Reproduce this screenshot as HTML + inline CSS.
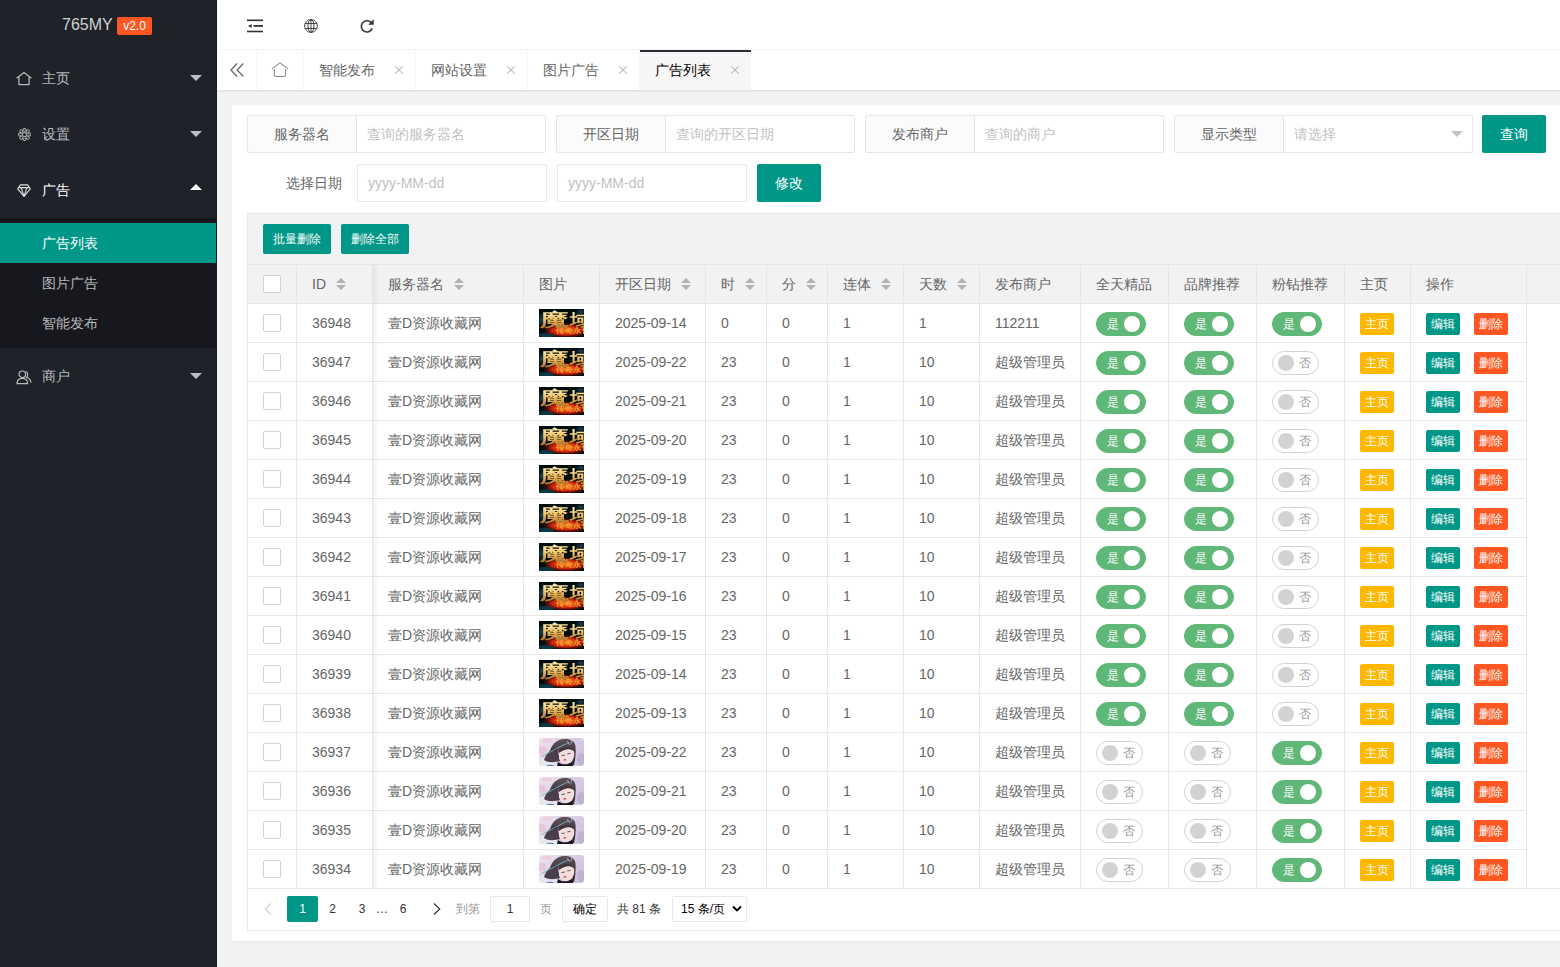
<!DOCTYPE html><html><head><meta charset="utf-8"><style>
*{margin:0;padding:0;box-sizing:border-box}
html,body{width:1560px;height:967px;overflow:hidden;background:#f2f2f2;font-family:"Liberation Sans",sans-serif;font-size:14px;color:#666}
.abs{position:absolute}
#side{position:absolute;left:0;top:0;width:217px;height:967px;background:#20222a}
#side .edge{position:absolute;left:216px;top:0;width:1px;height:967px;background:#171a22}
#logo{position:absolute;left:0;top:0;width:216px;height:50px;background:#20222a;box-shadow:0 1px 2px rgba(0,0,0,.15)}
#logo .t{position:absolute;left:62px;top:15px;font-size:16px;line-height:20px;color:rgba(255,255,255,.8)}
#logo .v{position:absolute;left:117px;top:17px;width:35px;height:18px;line-height:18px;background:#ff5722;color:#fff;font-size:12px;text-align:center;border-radius:2px}
.mi{position:absolute;left:0;width:216px;height:56px;line-height:56px;color:rgba(255,255,255,.7)}
.mi .tx{position:absolute;left:42px;top:0}
.mi svg{position:absolute}
.mi .ar{position:absolute;left:190px;top:25px;width:0;height:0;border-left:6px solid transparent;border-right:6px solid transparent;border-top:6px solid rgba(255,255,255,.7)}
.mi .ar.up{top:22px;border-top:none;border-bottom:6px solid #fff}
#sub{position:absolute;left:0;top:218px;width:216px;height:130px;background:#16181d}
.sd{position:absolute;left:0;width:216px;height:40px;line-height:40px;color:rgba(255,255,255,.7)}
.sd span{position:absolute;left:42px;top:0}
.sd.on{background:#009688;color:#fff}
#hdr{position:absolute;left:217px;top:0;width:1343px;height:50px;background:#fff;border-bottom:1px solid #f6f6f6}
#tabs{position:absolute;left:217px;top:50px;width:1343px;height:40px;background:#fff;box-shadow:0 1px 2px rgba(0,0,0,.1)}
.tsep{position:absolute;top:0;width:1px;height:40px;background:#f6f6f6}
.tab{position:absolute;top:0;width:112px;height:40px;line-height:40px;color:#666}
.tab .tx{position:absolute;left:16px;top:0}
.tab .x{position:absolute;left:90px;top:0;width:16px;height:40px}
.tab.on{background:#f6f6f6;color:#000}
.tab.on:before{content:"";position:absolute;left:1px;top:0;width:111px;height:2px;background:#292b34}
#card{position:absolute;left:232px;top:105px;width:1400px;height:836px;background:#fff;border-radius:2px;box-shadow:0 1px 2px 0 rgba(0,0,0,.05)}
.lbl{position:absolute;height:38px;line-height:36px;width:110px;border:1px solid #e6e6e6;background:#fbfbfb;text-align:center;color:#666;border-radius:2px 0 0 2px}
.inp{position:absolute;height:38px;line-height:36px;border:1px solid #e6e6e6;background:#fff;color:#c2c2c2;padding-left:10px;border-radius:0 2px 2px 0}
.inp2{border-radius:2px}
.btn{position:absolute;height:38px;line-height:38px;background:#009688;color:#fff;text-align:center;border-radius:2px}
.btnsm{position:absolute;height:30px;line-height:30px;background:#009688;color:#fff;font-size:12px;text-align:center;border-radius:2px}
#tbl{position:absolute;left:247px;top:213px;width:1400px;height:718px;border:1px solid #e6e6e6;background:#fff}
#tool{position:absolute;left:0;top:0;width:100%;height:51px;background:#f2f2f2;border-bottom:1px solid #e6e6e6}
#thead{position:absolute;left:0;top:51px;width:100%;height:39px;background:#f2f2f2;border-bottom:1px solid #e6e6e6}
.vl{position:absolute;width:1px;background:#e6e6e6}
.hl{position:absolute;height:1px;background:#e6e6e6}
.c{position:absolute;height:38px;line-height:38px;white-space:nowrap;color:#666}
.cb{position:absolute;width:18px;height:18px;border:1px solid #d2d2d2;background:#fff;border-radius:2px}
.sort{position:absolute;width:10px;height:13px}
.sort:before{content:"";position:absolute;left:0;top:0;border-left:5px solid transparent;border-right:5px solid transparent;border-bottom:5px solid #b2b2b2}
.sort:after{content:"";position:absolute;left:0;top:7px;border-left:5px solid transparent;border-right:5px solid transparent;border-top:5px solid #b2b2b2}
.sw{position:absolute;height:24px;border-radius:20px;font-size:12px;line-height:22px}
.sw.on{width:50px;background:#5fb878;border:1px solid #5fb878;color:#fff}
.sw.on em{position:absolute;left:10px;top:0;font-style:normal}
.sw.on i{position:absolute;left:27px;top:3px;width:16px;height:16px;border-radius:50%;background:#fff}
.sw.off{width:47px;background:#fff;border:1px solid #d2d2d2;color:#999}
.sw.off em{position:absolute;left:26px;top:0;font-style:normal}
.sw.off i{position:absolute;left:5px;top:3px;width:16px;height:16px;border-radius:50%;background:#d2d2d2}
.bx{position:absolute;width:34px;height:22px;line-height:22px;font-size:12px;color:#fff;text-align:center;border-radius:2px}
.img{position:absolute;width:45px;height:28px;overflow:hidden}
#shadowL{position:absolute;left:125px;top:51px;width:7px;height:624px;background:linear-gradient(to right,rgba(0,0,0,.05),rgba(0,0,0,0))}
#page{position:absolute;left:0;top:675px;width:100%;height:42px;font-size:12px;color:#333}
.pg{position:absolute;top:7px;height:26px;line-height:26px}
</style></head><body>
<div id="side">
<div id="logo"><div class="t">765MY</div><div class="v">v2.0</div></div>
<div class="mi" style="top:50px"><svg  style="left:16px;top:22px" width="16" height="14" viewBox="0 0 16 14"><path d="M0.6 6.2 L8 0.6 L15.4 6.2 M2.9 5.3 V12.6 H13.1 V5.3" fill="none" stroke="#bbb" stroke-width="1.25" stroke-linejoin="round"/></svg><span class="tx">主页</span><i class="ar"></i></div>
<div class="mi" style="top:106px"><svg style="left:18px;top:22px" width="13" height="13" viewBox="0 0 13 13"><g fill="#20222a" stroke="#a8a8a8" stroke-width="1.05"><circle cx="6.50" cy="11.10" r="1.45"/><circle cx="3.25" cy="9.75" r="1.45"/><circle cx="1.90" cy="6.50" r="1.45"/><circle cx="3.25" cy="3.25" r="1.45"/><circle cx="6.50" cy="1.90" r="1.45"/><circle cx="9.75" cy="3.25" r="1.45"/><circle cx="11.10" cy="6.50" r="1.45"/><circle cx="9.75" cy="9.75" r="1.45"/><circle cx="6.5" cy="6.5" r="3.1" fill="#20222a" stroke="none"/><circle cx="6.5" cy="6.5" r="2.2" stroke-width="1.2"/></g></svg><span class="tx">设置</span><i class="ar"></i></div>
<div class="mi" style="top:162px;color:#fff"><svg style="left:17px;top:22px" width="14" height="13" viewBox="0 0 14 13"><g fill="none" stroke="#ddd" stroke-width="1.1" stroke-linejoin="round"><path d="M3.4 0.9 H10.6 L13.3 4.9 L7 12.4 L0.7 4.9 Z"/><path d="M1.6 3.6 H12.4 M4.4 3.6 L5.2 7 L7 12.4 L8.8 7 L9.6 3.6"/></g></svg><span class="tx">广告</span><i class="ar up"></i></div>
<div id="sub"><div class="sd on" style="top:5px"><span>广告列表</span></div><div class="sd" style="top:45px"><span>图片广告</span></div><div class="sd" style="top:85px"><span>智能发布</span></div></div>
<div class="mi" style="top:348px"><svg style="left:16px;top:22px" width="16" height="15" viewBox="0 0 16 15"><g fill="none" stroke="#bbb" stroke-width="1.2"><circle cx="6.3" cy="4.3" r="3.3"/><path d="M1 13.7 C1 10 3 8.3 6.3 8.3 C9.6 8.3 11.6 10 11.6 13.7 Z"/><path d="M9.8 1.5 C11.8 2 12.5 5.5 10.6 7.4 C13 8 14.5 10 15 12.6"/></g></svg><span class="tx">商户</span><i class="ar"></i></div>
<div class="edge"></div>
</div>
<div id="hdr">
<svg class="abs" style="left:30px;top:19px" width="16" height="14" viewBox="0 0 16 14"><g fill="#333"><rect x="0" y="0.5" width="16" height="1.6"/><rect x="6.5" y="6" width="9.5" height="1.8"/><rect x="0" y="11.7" width="16" height="1.6"/><path d="M1 6.9 L4.6 4.9 V8.9 Z"/></g></svg><svg class="abs" style="left:87px;top:19px" width="14" height="14" viewBox="0 0 14 14"><g fill="none" stroke="#333" stroke-width="0.9"><circle cx="7" cy="7" r="6.4"/><ellipse cx="7" cy="7" rx="3" ry="6.4"/><path d="M7 0.7 V13.3 M1.2 4.5 H12.8 M1.2 9.5 H12.8"/></g></svg><svg class="abs" style="left:143px;top:19px" width="14" height="14" viewBox="0 0 14 14"><g fill="none" stroke="#333" stroke-width="1.6"><path d="M11.6 4.2 A5.6 5.6 0 1 0 12.2 9.4"/></g><path d="M13.7 0.3 V5.8 H8.2 Z" fill="#333"/></svg>
</div>
<div id="tabs">
<svg class="abs" style="left:13px;top:13px" width="14" height="14" viewBox="0 0 14 14"><path d="M7 0.5 L1 7 L7 13.5 M13.2 0.5 L7.2 7 L13.2 13.5" fill="none" stroke="#666" stroke-width="1.3"/></svg>
<svg class="abs" style="left:54px;top:12px" width="18" height="16" viewBox="0 0 18 16"><g fill="none" stroke="#888" stroke-width="1.1" stroke-linecap="round"><path d="M1.2 6.6 L9 0.9 L16.8 6.6"/><path d="M3.4 7.3 V13.3 Q3.4 14.5 4.6 14.5 H13.3 Q14.5 14.5 14.5 13.3 V7.3"/></g></svg>
<div class="tsep" style="left:39px"></div>
<div class="tsep" style="left:86px"></div>
<div class="tsep" style="left:198px"></div>
<div class="tsep" style="left:310px"></div>
<div class="tsep" style="left:422px"></div>
<div class="tab" style="left:86px"><span class="tx">智能发布</span><span class="x"><svg style="position:absolute;left:2px;top:16px" width="8" height="8" viewBox="0 0 8 8"><path d="M0.4 0.4 L7.6 7.6 M7.6 0.4 L0.4 7.6" stroke="#bbb" stroke-width="1.1"/></svg></span></div>
<div class="tab" style="left:198px"><span class="tx">网站设置</span><span class="x"><svg style="position:absolute;left:2px;top:16px" width="8" height="8" viewBox="0 0 8 8"><path d="M0.4 0.4 L7.6 7.6 M7.6 0.4 L0.4 7.6" stroke="#bbb" stroke-width="1.1"/></svg></span></div>
<div class="tab" style="left:310px"><span class="tx">图片广告</span><span class="x"><svg style="position:absolute;left:2px;top:16px" width="8" height="8" viewBox="0 0 8 8"><path d="M0.4 0.4 L7.6 7.6 M7.6 0.4 L0.4 7.6" stroke="#bbb" stroke-width="1.1"/></svg></span></div>
<div class="tab on" style="left:422px"><span class="tx">广告列表</span><span class="x"><svg style="position:absolute;left:2px;top:16px" width="8" height="8" viewBox="0 0 8 8"><path d="M0.4 0.4 L7.6 7.6 M7.6 0.4 L0.4 7.6" stroke="#bbb" stroke-width="1.1"/></svg></span></div>
</div>
<div id="card"></div>
<div class="lbl" style="left:247px;top:115px">服务器名</div>
<div class="inp" style="left:356px;top:115px;width:190px">查询的服务器名</div>
<div class="lbl" style="left:556px;top:115px">开区日期</div>
<div class="inp" style="left:665px;top:115px;width:190px">查询的开区日期</div>
<div class="lbl" style="left:865px;top:115px">发布商户</div>
<div class="inp" style="left:974px;top:115px;width:190px">查询的商户</div>
<div class="lbl" style="left:1174px;top:115px">显示类型</div>
<div class="inp" style="left:1283px;top:115px;width:190px">请选择</div>
<div class="abs" style="left:1451px;top:131px;width:0;height:0;border-left:6px solid transparent;border-right:6px solid transparent;border-top:6px solid #c2c2c2"></div>
<div class="btn" style="left:1482px;top:115px;width:64px">查询</div>
<div class="abs" style="left:247px;top:164px;width:110px;height:38px;line-height:38px;text-align:right;padding-right:15px;color:#666">选择日期</div>
<div class="inp inp2" style="left:357px;top:164px;width:190px">yyyy-MM-dd</div>
<div class="inp inp2" style="left:557px;top:164px;width:190px">yyyy-MM-dd</div>
<div class="btn" style="left:757px;top:164px;width:64px">修改</div>
<div id="tbl">
<div id="tool"><div class="btnsm" style="left:15px;top:10px;width:68px">批量删除</div><div class="btnsm" style="left:93px;top:10px;width:68px">删除全部</div></div>
<div id="thead"></div>
<div class="vl" style="left:48px;top:51px;height:623px"></div>
<div class="vl" style="left:124px;top:51px;height:623px"></div>
<div class="vl" style="left:275px;top:51px;height:623px"></div>
<div class="vl" style="left:351px;top:51px;height:623px"></div>
<div class="vl" style="left:457px;top:51px;height:623px"></div>
<div class="vl" style="left:518px;top:51px;height:623px"></div>
<div class="vl" style="left:579px;top:51px;height:623px"></div>
<div class="vl" style="left:655px;top:51px;height:623px"></div>
<div class="vl" style="left:731px;top:51px;height:623px"></div>
<div class="vl" style="left:832px;top:51px;height:623px"></div>
<div class="vl" style="left:920px;top:51px;height:623px"></div>
<div class="vl" style="left:1008px;top:51px;height:623px"></div>
<div class="vl" style="left:1096px;top:51px;height:623px"></div>
<div class="vl" style="left:1162px;top:51px;height:623px"></div>
<div class="vl" style="left:1278px;top:51px;height:623px"></div>
<div class="hl" style="left:0;top:128px;width:1279px"></div>
<div class="hl" style="left:0;top:167px;width:1279px"></div>
<div class="hl" style="left:0;top:206px;width:1279px"></div>
<div class="hl" style="left:0;top:245px;width:1279px"></div>
<div class="hl" style="left:0;top:284px;width:1279px"></div>
<div class="hl" style="left:0;top:323px;width:1279px"></div>
<div class="hl" style="left:0;top:362px;width:1279px"></div>
<div class="hl" style="left:0;top:401px;width:1279px"></div>
<div class="hl" style="left:0;top:440px;width:1279px"></div>
<div class="hl" style="left:0;top:479px;width:1279px"></div>
<div class="hl" style="left:0;top:518px;width:1279px"></div>
<div class="hl" style="left:0;top:557px;width:1279px"></div>
<div class="hl" style="left:0;top:596px;width:1279px"></div>
<div class="hl" style="left:0;top:635px;width:1279px"></div>
<div class="hl" style="left:0;top:674px;width:1279px"></div>
<div class="hl" style="left:0;top:674px;width:100%"></div>
<div class="cb" style="left:15px;top:61px"></div>
<div class="c" style="left:64px;top:51px">ID</div>
<i class="sort" style="left:88px;top:64px"></i>
<div class="c" style="left:140px;top:51px">服务器名</div>
<i class="sort" style="left:206px;top:64px"></i>
<div class="c" style="left:291px;top:51px">图片</div>
<div class="c" style="left:367px;top:51px">开区日期</div>
<i class="sort" style="left:433px;top:64px"></i>
<div class="c" style="left:473px;top:51px">时</div>
<i class="sort" style="left:497px;top:64px"></i>
<div class="c" style="left:534px;top:51px">分</div>
<i class="sort" style="left:558px;top:64px"></i>
<div class="c" style="left:595px;top:51px">连体</div>
<i class="sort" style="left:633px;top:64px"></i>
<div class="c" style="left:671px;top:51px">天数</div>
<i class="sort" style="left:709px;top:64px"></i>
<div class="c" style="left:747px;top:51px">发布商户</div>
<div class="c" style="left:848px;top:51px">全天精品</div>
<div class="c" style="left:936px;top:51px">品牌推荐</div>
<div class="c" style="left:1024px;top:51px">粉钻推荐</div>
<div class="c" style="left:1112px;top:51px">主页</div>
<div class="c" style="left:1178px;top:51px">操作</div>
<div class="cb" style="left:15px;top:100px"></div>
<div class="c" style="left:64px;top:90px">36948</div>
<div class="c" style="left:140px;top:90px">壹D资源收藏网</div>
<div class="c" style="left:367px;top:90px">2025-09-14</div>
<div class="c" style="left:473px;top:90px">0</div>
<div class="c" style="left:534px;top:90px">0</div>
<div class="c" style="left:595px;top:90px">1</div>
<div class="c" style="left:671px;top:90px">1</div>
<div class="c" style="left:747px;top:90px">112211</div>
<div class="img" style="left:291px;top:95px"><svg width="45" height="28" viewBox="0 0 45 28"><defs><linearGradient id="gd0" x1="0" y1="0" x2="0" y2="1"><stop offset="0" stop-color="#fff2b8"/><stop offset=".5" stop-color="#f0c060"/><stop offset="1" stop-color="#a86a20"/></linearGradient><radialGradient id="fl0" cx=".5" cy=".5" r=".5"><stop offset="0" stop-color="#ff7a20"/><stop offset=".6" stop-color="#c82008"/><stop offset="1" stop-color="#500800" stop-opacity="0"/></radialGradient><radialGradient id="tl0" cx=".5" cy=".5" r=".5"><stop offset="0" stop-color="#1a4a5a"/><stop offset="1" stop-color="#0a1a22" stop-opacity="0"/></radialGradient><filter id="mb0"><feGaussianBlur stdDeviation=".35"/></filter></defs><g filter="url(#mb0)"><rect width="45" height="28" fill="#04080c"/><ellipse cx="3" cy="11" rx="7" ry="10" fill="url(#tl0)"/><ellipse cx="8" cy="27" rx="14" ry="5" fill="url(#tl0)"/><ellipse cx="42" cy="3" rx="7" ry="5" fill="url(#tl0)"/><ellipse cx="27" cy="21.5" rx="24" ry="7.5" fill="url(#fl0)"/><ellipse cx="6" cy="27" rx="9" ry="3" fill="#0e3a4a" opacity=".7"/><text transform="translate(1.2,16.6) scale(1.62,1)" font-size="17.5" font-weight="bold" font-family="Liberation Sans" fill="url(#gd0)">魔</text><text transform="translate(30.5,16.8) scale(1.3,1)" font-size="16.5" font-weight="bold" font-family="Liberation Sans" fill="url(#gd0)">域</text><text transform="translate(17,23.6) scale(1.2,1)" font-size="7" font-weight="bold" font-family="Liberation Sans" fill="#f0a030">传奇永恒</text></g></svg></div>
<div class="sw on" style="left:848px;top:98px"><em>是</em><i></i></div>
<div class="sw on" style="left:936px;top:98px"><em>是</em><i></i></div>
<div class="sw on" style="left:1024px;top:98px"><em>是</em><i></i></div>
<div class="bx" style="left:1112px;top:99px;background:#ffb800">主页</div>
<div class="bx" style="left:1178px;top:99px;background:#009688">编辑</div>
<div class="bx" style="left:1226px;top:99px;background:#ff5722">删除</div>
<div class="cb" style="left:15px;top:139px"></div>
<div class="c" style="left:64px;top:129px">36947</div>
<div class="c" style="left:140px;top:129px">壹D资源收藏网</div>
<div class="c" style="left:367px;top:129px">2025-09-22</div>
<div class="c" style="left:473px;top:129px">23</div>
<div class="c" style="left:534px;top:129px">0</div>
<div class="c" style="left:595px;top:129px">1</div>
<div class="c" style="left:671px;top:129px">10</div>
<div class="c" style="left:747px;top:129px">超级管理员</div>
<div class="img" style="left:291px;top:134px"><svg width="45" height="28" viewBox="0 0 45 28"><defs><linearGradient id="gd1" x1="0" y1="0" x2="0" y2="1"><stop offset="0" stop-color="#fff2b8"/><stop offset=".5" stop-color="#f0c060"/><stop offset="1" stop-color="#a86a20"/></linearGradient><radialGradient id="fl1" cx=".5" cy=".5" r=".5"><stop offset="0" stop-color="#ff7a20"/><stop offset=".6" stop-color="#c82008"/><stop offset="1" stop-color="#500800" stop-opacity="0"/></radialGradient><radialGradient id="tl1" cx=".5" cy=".5" r=".5"><stop offset="0" stop-color="#1a4a5a"/><stop offset="1" stop-color="#0a1a22" stop-opacity="0"/></radialGradient><filter id="mb1"><feGaussianBlur stdDeviation=".35"/></filter></defs><g filter="url(#mb1)"><rect width="45" height="28" fill="#04080c"/><ellipse cx="3" cy="11" rx="7" ry="10" fill="url(#tl1)"/><ellipse cx="8" cy="27" rx="14" ry="5" fill="url(#tl1)"/><ellipse cx="42" cy="3" rx="7" ry="5" fill="url(#tl1)"/><ellipse cx="27" cy="21.5" rx="24" ry="7.5" fill="url(#fl1)"/><ellipse cx="6" cy="27" rx="9" ry="3" fill="#0e3a4a" opacity=".7"/><text transform="translate(1.2,16.6) scale(1.62,1)" font-size="17.5" font-weight="bold" font-family="Liberation Sans" fill="url(#gd1)">魔</text><text transform="translate(30.5,16.8) scale(1.3,1)" font-size="16.5" font-weight="bold" font-family="Liberation Sans" fill="url(#gd1)">域</text><text transform="translate(17,23.6) scale(1.2,1)" font-size="7" font-weight="bold" font-family="Liberation Sans" fill="#f0a030">传奇永恒</text></g></svg></div>
<div class="sw on" style="left:848px;top:137px"><em>是</em><i></i></div>
<div class="sw on" style="left:936px;top:137px"><em>是</em><i></i></div>
<div class="sw off" style="left:1024px;top:137px"><i></i><em>否</em></div>
<div class="bx" style="left:1112px;top:138px;background:#ffb800">主页</div>
<div class="bx" style="left:1178px;top:138px;background:#009688">编辑</div>
<div class="bx" style="left:1226px;top:138px;background:#ff5722">删除</div>
<div class="cb" style="left:15px;top:178px"></div>
<div class="c" style="left:64px;top:168px">36946</div>
<div class="c" style="left:140px;top:168px">壹D资源收藏网</div>
<div class="c" style="left:367px;top:168px">2025-09-21</div>
<div class="c" style="left:473px;top:168px">23</div>
<div class="c" style="left:534px;top:168px">0</div>
<div class="c" style="left:595px;top:168px">1</div>
<div class="c" style="left:671px;top:168px">10</div>
<div class="c" style="left:747px;top:168px">超级管理员</div>
<div class="img" style="left:291px;top:173px"><svg width="45" height="28" viewBox="0 0 45 28"><defs><linearGradient id="gd2" x1="0" y1="0" x2="0" y2="1"><stop offset="0" stop-color="#fff2b8"/><stop offset=".5" stop-color="#f0c060"/><stop offset="1" stop-color="#a86a20"/></linearGradient><radialGradient id="fl2" cx=".5" cy=".5" r=".5"><stop offset="0" stop-color="#ff7a20"/><stop offset=".6" stop-color="#c82008"/><stop offset="1" stop-color="#500800" stop-opacity="0"/></radialGradient><radialGradient id="tl2" cx=".5" cy=".5" r=".5"><stop offset="0" stop-color="#1a4a5a"/><stop offset="1" stop-color="#0a1a22" stop-opacity="0"/></radialGradient><filter id="mb2"><feGaussianBlur stdDeviation=".35"/></filter></defs><g filter="url(#mb2)"><rect width="45" height="28" fill="#04080c"/><ellipse cx="3" cy="11" rx="7" ry="10" fill="url(#tl2)"/><ellipse cx="8" cy="27" rx="14" ry="5" fill="url(#tl2)"/><ellipse cx="42" cy="3" rx="7" ry="5" fill="url(#tl2)"/><ellipse cx="27" cy="21.5" rx="24" ry="7.5" fill="url(#fl2)"/><ellipse cx="6" cy="27" rx="9" ry="3" fill="#0e3a4a" opacity=".7"/><text transform="translate(1.2,16.6) scale(1.62,1)" font-size="17.5" font-weight="bold" font-family="Liberation Sans" fill="url(#gd2)">魔</text><text transform="translate(30.5,16.8) scale(1.3,1)" font-size="16.5" font-weight="bold" font-family="Liberation Sans" fill="url(#gd2)">域</text><text transform="translate(17,23.6) scale(1.2,1)" font-size="7" font-weight="bold" font-family="Liberation Sans" fill="#f0a030">传奇永恒</text></g></svg></div>
<div class="sw on" style="left:848px;top:176px"><em>是</em><i></i></div>
<div class="sw on" style="left:936px;top:176px"><em>是</em><i></i></div>
<div class="sw off" style="left:1024px;top:176px"><i></i><em>否</em></div>
<div class="bx" style="left:1112px;top:177px;background:#ffb800">主页</div>
<div class="bx" style="left:1178px;top:177px;background:#009688">编辑</div>
<div class="bx" style="left:1226px;top:177px;background:#ff5722">删除</div>
<div class="cb" style="left:15px;top:217px"></div>
<div class="c" style="left:64px;top:207px">36945</div>
<div class="c" style="left:140px;top:207px">壹D资源收藏网</div>
<div class="c" style="left:367px;top:207px">2025-09-20</div>
<div class="c" style="left:473px;top:207px">23</div>
<div class="c" style="left:534px;top:207px">0</div>
<div class="c" style="left:595px;top:207px">1</div>
<div class="c" style="left:671px;top:207px">10</div>
<div class="c" style="left:747px;top:207px">超级管理员</div>
<div class="img" style="left:291px;top:212px"><svg width="45" height="28" viewBox="0 0 45 28"><defs><linearGradient id="gd3" x1="0" y1="0" x2="0" y2="1"><stop offset="0" stop-color="#fff2b8"/><stop offset=".5" stop-color="#f0c060"/><stop offset="1" stop-color="#a86a20"/></linearGradient><radialGradient id="fl3" cx=".5" cy=".5" r=".5"><stop offset="0" stop-color="#ff7a20"/><stop offset=".6" stop-color="#c82008"/><stop offset="1" stop-color="#500800" stop-opacity="0"/></radialGradient><radialGradient id="tl3" cx=".5" cy=".5" r=".5"><stop offset="0" stop-color="#1a4a5a"/><stop offset="1" stop-color="#0a1a22" stop-opacity="0"/></radialGradient><filter id="mb3"><feGaussianBlur stdDeviation=".35"/></filter></defs><g filter="url(#mb3)"><rect width="45" height="28" fill="#04080c"/><ellipse cx="3" cy="11" rx="7" ry="10" fill="url(#tl3)"/><ellipse cx="8" cy="27" rx="14" ry="5" fill="url(#tl3)"/><ellipse cx="42" cy="3" rx="7" ry="5" fill="url(#tl3)"/><ellipse cx="27" cy="21.5" rx="24" ry="7.5" fill="url(#fl3)"/><ellipse cx="6" cy="27" rx="9" ry="3" fill="#0e3a4a" opacity=".7"/><text transform="translate(1.2,16.6) scale(1.62,1)" font-size="17.5" font-weight="bold" font-family="Liberation Sans" fill="url(#gd3)">魔</text><text transform="translate(30.5,16.8) scale(1.3,1)" font-size="16.5" font-weight="bold" font-family="Liberation Sans" fill="url(#gd3)">域</text><text transform="translate(17,23.6) scale(1.2,1)" font-size="7" font-weight="bold" font-family="Liberation Sans" fill="#f0a030">传奇永恒</text></g></svg></div>
<div class="sw on" style="left:848px;top:215px"><em>是</em><i></i></div>
<div class="sw on" style="left:936px;top:215px"><em>是</em><i></i></div>
<div class="sw off" style="left:1024px;top:215px"><i></i><em>否</em></div>
<div class="bx" style="left:1112px;top:216px;background:#ffb800">主页</div>
<div class="bx" style="left:1178px;top:216px;background:#009688">编辑</div>
<div class="bx" style="left:1226px;top:216px;background:#ff5722">删除</div>
<div class="cb" style="left:15px;top:256px"></div>
<div class="c" style="left:64px;top:246px">36944</div>
<div class="c" style="left:140px;top:246px">壹D资源收藏网</div>
<div class="c" style="left:367px;top:246px">2025-09-19</div>
<div class="c" style="left:473px;top:246px">23</div>
<div class="c" style="left:534px;top:246px">0</div>
<div class="c" style="left:595px;top:246px">1</div>
<div class="c" style="left:671px;top:246px">10</div>
<div class="c" style="left:747px;top:246px">超级管理员</div>
<div class="img" style="left:291px;top:251px"><svg width="45" height="28" viewBox="0 0 45 28"><defs><linearGradient id="gd4" x1="0" y1="0" x2="0" y2="1"><stop offset="0" stop-color="#fff2b8"/><stop offset=".5" stop-color="#f0c060"/><stop offset="1" stop-color="#a86a20"/></linearGradient><radialGradient id="fl4" cx=".5" cy=".5" r=".5"><stop offset="0" stop-color="#ff7a20"/><stop offset=".6" stop-color="#c82008"/><stop offset="1" stop-color="#500800" stop-opacity="0"/></radialGradient><radialGradient id="tl4" cx=".5" cy=".5" r=".5"><stop offset="0" stop-color="#1a4a5a"/><stop offset="1" stop-color="#0a1a22" stop-opacity="0"/></radialGradient><filter id="mb4"><feGaussianBlur stdDeviation=".35"/></filter></defs><g filter="url(#mb4)"><rect width="45" height="28" fill="#04080c"/><ellipse cx="3" cy="11" rx="7" ry="10" fill="url(#tl4)"/><ellipse cx="8" cy="27" rx="14" ry="5" fill="url(#tl4)"/><ellipse cx="42" cy="3" rx="7" ry="5" fill="url(#tl4)"/><ellipse cx="27" cy="21.5" rx="24" ry="7.5" fill="url(#fl4)"/><ellipse cx="6" cy="27" rx="9" ry="3" fill="#0e3a4a" opacity=".7"/><text transform="translate(1.2,16.6) scale(1.62,1)" font-size="17.5" font-weight="bold" font-family="Liberation Sans" fill="url(#gd4)">魔</text><text transform="translate(30.5,16.8) scale(1.3,1)" font-size="16.5" font-weight="bold" font-family="Liberation Sans" fill="url(#gd4)">域</text><text transform="translate(17,23.6) scale(1.2,1)" font-size="7" font-weight="bold" font-family="Liberation Sans" fill="#f0a030">传奇永恒</text></g></svg></div>
<div class="sw on" style="left:848px;top:254px"><em>是</em><i></i></div>
<div class="sw on" style="left:936px;top:254px"><em>是</em><i></i></div>
<div class="sw off" style="left:1024px;top:254px"><i></i><em>否</em></div>
<div class="bx" style="left:1112px;top:255px;background:#ffb800">主页</div>
<div class="bx" style="left:1178px;top:255px;background:#009688">编辑</div>
<div class="bx" style="left:1226px;top:255px;background:#ff5722">删除</div>
<div class="cb" style="left:15px;top:295px"></div>
<div class="c" style="left:64px;top:285px">36943</div>
<div class="c" style="left:140px;top:285px">壹D资源收藏网</div>
<div class="c" style="left:367px;top:285px">2025-09-18</div>
<div class="c" style="left:473px;top:285px">23</div>
<div class="c" style="left:534px;top:285px">0</div>
<div class="c" style="left:595px;top:285px">1</div>
<div class="c" style="left:671px;top:285px">10</div>
<div class="c" style="left:747px;top:285px">超级管理员</div>
<div class="img" style="left:291px;top:290px"><svg width="45" height="28" viewBox="0 0 45 28"><defs><linearGradient id="gd5" x1="0" y1="0" x2="0" y2="1"><stop offset="0" stop-color="#fff2b8"/><stop offset=".5" stop-color="#f0c060"/><stop offset="1" stop-color="#a86a20"/></linearGradient><radialGradient id="fl5" cx=".5" cy=".5" r=".5"><stop offset="0" stop-color="#ff7a20"/><stop offset=".6" stop-color="#c82008"/><stop offset="1" stop-color="#500800" stop-opacity="0"/></radialGradient><radialGradient id="tl5" cx=".5" cy=".5" r=".5"><stop offset="0" stop-color="#1a4a5a"/><stop offset="1" stop-color="#0a1a22" stop-opacity="0"/></radialGradient><filter id="mb5"><feGaussianBlur stdDeviation=".35"/></filter></defs><g filter="url(#mb5)"><rect width="45" height="28" fill="#04080c"/><ellipse cx="3" cy="11" rx="7" ry="10" fill="url(#tl5)"/><ellipse cx="8" cy="27" rx="14" ry="5" fill="url(#tl5)"/><ellipse cx="42" cy="3" rx="7" ry="5" fill="url(#tl5)"/><ellipse cx="27" cy="21.5" rx="24" ry="7.5" fill="url(#fl5)"/><ellipse cx="6" cy="27" rx="9" ry="3" fill="#0e3a4a" opacity=".7"/><text transform="translate(1.2,16.6) scale(1.62,1)" font-size="17.5" font-weight="bold" font-family="Liberation Sans" fill="url(#gd5)">魔</text><text transform="translate(30.5,16.8) scale(1.3,1)" font-size="16.5" font-weight="bold" font-family="Liberation Sans" fill="url(#gd5)">域</text><text transform="translate(17,23.6) scale(1.2,1)" font-size="7" font-weight="bold" font-family="Liberation Sans" fill="#f0a030">传奇永恒</text></g></svg></div>
<div class="sw on" style="left:848px;top:293px"><em>是</em><i></i></div>
<div class="sw on" style="left:936px;top:293px"><em>是</em><i></i></div>
<div class="sw off" style="left:1024px;top:293px"><i></i><em>否</em></div>
<div class="bx" style="left:1112px;top:294px;background:#ffb800">主页</div>
<div class="bx" style="left:1178px;top:294px;background:#009688">编辑</div>
<div class="bx" style="left:1226px;top:294px;background:#ff5722">删除</div>
<div class="cb" style="left:15px;top:334px"></div>
<div class="c" style="left:64px;top:324px">36942</div>
<div class="c" style="left:140px;top:324px">壹D资源收藏网</div>
<div class="c" style="left:367px;top:324px">2025-09-17</div>
<div class="c" style="left:473px;top:324px">23</div>
<div class="c" style="left:534px;top:324px">0</div>
<div class="c" style="left:595px;top:324px">1</div>
<div class="c" style="left:671px;top:324px">10</div>
<div class="c" style="left:747px;top:324px">超级管理员</div>
<div class="img" style="left:291px;top:329px"><svg width="45" height="28" viewBox="0 0 45 28"><defs><linearGradient id="gd6" x1="0" y1="0" x2="0" y2="1"><stop offset="0" stop-color="#fff2b8"/><stop offset=".5" stop-color="#f0c060"/><stop offset="1" stop-color="#a86a20"/></linearGradient><radialGradient id="fl6" cx=".5" cy=".5" r=".5"><stop offset="0" stop-color="#ff7a20"/><stop offset=".6" stop-color="#c82008"/><stop offset="1" stop-color="#500800" stop-opacity="0"/></radialGradient><radialGradient id="tl6" cx=".5" cy=".5" r=".5"><stop offset="0" stop-color="#1a4a5a"/><stop offset="1" stop-color="#0a1a22" stop-opacity="0"/></radialGradient><filter id="mb6"><feGaussianBlur stdDeviation=".35"/></filter></defs><g filter="url(#mb6)"><rect width="45" height="28" fill="#04080c"/><ellipse cx="3" cy="11" rx="7" ry="10" fill="url(#tl6)"/><ellipse cx="8" cy="27" rx="14" ry="5" fill="url(#tl6)"/><ellipse cx="42" cy="3" rx="7" ry="5" fill="url(#tl6)"/><ellipse cx="27" cy="21.5" rx="24" ry="7.5" fill="url(#fl6)"/><ellipse cx="6" cy="27" rx="9" ry="3" fill="#0e3a4a" opacity=".7"/><text transform="translate(1.2,16.6) scale(1.62,1)" font-size="17.5" font-weight="bold" font-family="Liberation Sans" fill="url(#gd6)">魔</text><text transform="translate(30.5,16.8) scale(1.3,1)" font-size="16.5" font-weight="bold" font-family="Liberation Sans" fill="url(#gd6)">域</text><text transform="translate(17,23.6) scale(1.2,1)" font-size="7" font-weight="bold" font-family="Liberation Sans" fill="#f0a030">传奇永恒</text></g></svg></div>
<div class="sw on" style="left:848px;top:332px"><em>是</em><i></i></div>
<div class="sw on" style="left:936px;top:332px"><em>是</em><i></i></div>
<div class="sw off" style="left:1024px;top:332px"><i></i><em>否</em></div>
<div class="bx" style="left:1112px;top:333px;background:#ffb800">主页</div>
<div class="bx" style="left:1178px;top:333px;background:#009688">编辑</div>
<div class="bx" style="left:1226px;top:333px;background:#ff5722">删除</div>
<div class="cb" style="left:15px;top:373px"></div>
<div class="c" style="left:64px;top:363px">36941</div>
<div class="c" style="left:140px;top:363px">壹D资源收藏网</div>
<div class="c" style="left:367px;top:363px">2025-09-16</div>
<div class="c" style="left:473px;top:363px">23</div>
<div class="c" style="left:534px;top:363px">0</div>
<div class="c" style="left:595px;top:363px">1</div>
<div class="c" style="left:671px;top:363px">10</div>
<div class="c" style="left:747px;top:363px">超级管理员</div>
<div class="img" style="left:291px;top:368px"><svg width="45" height="28" viewBox="0 0 45 28"><defs><linearGradient id="gd7" x1="0" y1="0" x2="0" y2="1"><stop offset="0" stop-color="#fff2b8"/><stop offset=".5" stop-color="#f0c060"/><stop offset="1" stop-color="#a86a20"/></linearGradient><radialGradient id="fl7" cx=".5" cy=".5" r=".5"><stop offset="0" stop-color="#ff7a20"/><stop offset=".6" stop-color="#c82008"/><stop offset="1" stop-color="#500800" stop-opacity="0"/></radialGradient><radialGradient id="tl7" cx=".5" cy=".5" r=".5"><stop offset="0" stop-color="#1a4a5a"/><stop offset="1" stop-color="#0a1a22" stop-opacity="0"/></radialGradient><filter id="mb7"><feGaussianBlur stdDeviation=".35"/></filter></defs><g filter="url(#mb7)"><rect width="45" height="28" fill="#04080c"/><ellipse cx="3" cy="11" rx="7" ry="10" fill="url(#tl7)"/><ellipse cx="8" cy="27" rx="14" ry="5" fill="url(#tl7)"/><ellipse cx="42" cy="3" rx="7" ry="5" fill="url(#tl7)"/><ellipse cx="27" cy="21.5" rx="24" ry="7.5" fill="url(#fl7)"/><ellipse cx="6" cy="27" rx="9" ry="3" fill="#0e3a4a" opacity=".7"/><text transform="translate(1.2,16.6) scale(1.62,1)" font-size="17.5" font-weight="bold" font-family="Liberation Sans" fill="url(#gd7)">魔</text><text transform="translate(30.5,16.8) scale(1.3,1)" font-size="16.5" font-weight="bold" font-family="Liberation Sans" fill="url(#gd7)">域</text><text transform="translate(17,23.6) scale(1.2,1)" font-size="7" font-weight="bold" font-family="Liberation Sans" fill="#f0a030">传奇永恒</text></g></svg></div>
<div class="sw on" style="left:848px;top:371px"><em>是</em><i></i></div>
<div class="sw on" style="left:936px;top:371px"><em>是</em><i></i></div>
<div class="sw off" style="left:1024px;top:371px"><i></i><em>否</em></div>
<div class="bx" style="left:1112px;top:372px;background:#ffb800">主页</div>
<div class="bx" style="left:1178px;top:372px;background:#009688">编辑</div>
<div class="bx" style="left:1226px;top:372px;background:#ff5722">删除</div>
<div class="cb" style="left:15px;top:412px"></div>
<div class="c" style="left:64px;top:402px">36940</div>
<div class="c" style="left:140px;top:402px">壹D资源收藏网</div>
<div class="c" style="left:367px;top:402px">2025-09-15</div>
<div class="c" style="left:473px;top:402px">23</div>
<div class="c" style="left:534px;top:402px">0</div>
<div class="c" style="left:595px;top:402px">1</div>
<div class="c" style="left:671px;top:402px">10</div>
<div class="c" style="left:747px;top:402px">超级管理员</div>
<div class="img" style="left:291px;top:407px"><svg width="45" height="28" viewBox="0 0 45 28"><defs><linearGradient id="gd8" x1="0" y1="0" x2="0" y2="1"><stop offset="0" stop-color="#fff2b8"/><stop offset=".5" stop-color="#f0c060"/><stop offset="1" stop-color="#a86a20"/></linearGradient><radialGradient id="fl8" cx=".5" cy=".5" r=".5"><stop offset="0" stop-color="#ff7a20"/><stop offset=".6" stop-color="#c82008"/><stop offset="1" stop-color="#500800" stop-opacity="0"/></radialGradient><radialGradient id="tl8" cx=".5" cy=".5" r=".5"><stop offset="0" stop-color="#1a4a5a"/><stop offset="1" stop-color="#0a1a22" stop-opacity="0"/></radialGradient><filter id="mb8"><feGaussianBlur stdDeviation=".35"/></filter></defs><g filter="url(#mb8)"><rect width="45" height="28" fill="#04080c"/><ellipse cx="3" cy="11" rx="7" ry="10" fill="url(#tl8)"/><ellipse cx="8" cy="27" rx="14" ry="5" fill="url(#tl8)"/><ellipse cx="42" cy="3" rx="7" ry="5" fill="url(#tl8)"/><ellipse cx="27" cy="21.5" rx="24" ry="7.5" fill="url(#fl8)"/><ellipse cx="6" cy="27" rx="9" ry="3" fill="#0e3a4a" opacity=".7"/><text transform="translate(1.2,16.6) scale(1.62,1)" font-size="17.5" font-weight="bold" font-family="Liberation Sans" fill="url(#gd8)">魔</text><text transform="translate(30.5,16.8) scale(1.3,1)" font-size="16.5" font-weight="bold" font-family="Liberation Sans" fill="url(#gd8)">域</text><text transform="translate(17,23.6) scale(1.2,1)" font-size="7" font-weight="bold" font-family="Liberation Sans" fill="#f0a030">传奇永恒</text></g></svg></div>
<div class="sw on" style="left:848px;top:410px"><em>是</em><i></i></div>
<div class="sw on" style="left:936px;top:410px"><em>是</em><i></i></div>
<div class="sw off" style="left:1024px;top:410px"><i></i><em>否</em></div>
<div class="bx" style="left:1112px;top:411px;background:#ffb800">主页</div>
<div class="bx" style="left:1178px;top:411px;background:#009688">编辑</div>
<div class="bx" style="left:1226px;top:411px;background:#ff5722">删除</div>
<div class="cb" style="left:15px;top:451px"></div>
<div class="c" style="left:64px;top:441px">36939</div>
<div class="c" style="left:140px;top:441px">壹D资源收藏网</div>
<div class="c" style="left:367px;top:441px">2025-09-14</div>
<div class="c" style="left:473px;top:441px">23</div>
<div class="c" style="left:534px;top:441px">0</div>
<div class="c" style="left:595px;top:441px">1</div>
<div class="c" style="left:671px;top:441px">10</div>
<div class="c" style="left:747px;top:441px">超级管理员</div>
<div class="img" style="left:291px;top:446px"><svg width="45" height="28" viewBox="0 0 45 28"><defs><linearGradient id="gd9" x1="0" y1="0" x2="0" y2="1"><stop offset="0" stop-color="#fff2b8"/><stop offset=".5" stop-color="#f0c060"/><stop offset="1" stop-color="#a86a20"/></linearGradient><radialGradient id="fl9" cx=".5" cy=".5" r=".5"><stop offset="0" stop-color="#ff7a20"/><stop offset=".6" stop-color="#c82008"/><stop offset="1" stop-color="#500800" stop-opacity="0"/></radialGradient><radialGradient id="tl9" cx=".5" cy=".5" r=".5"><stop offset="0" stop-color="#1a4a5a"/><stop offset="1" stop-color="#0a1a22" stop-opacity="0"/></radialGradient><filter id="mb9"><feGaussianBlur stdDeviation=".35"/></filter></defs><g filter="url(#mb9)"><rect width="45" height="28" fill="#04080c"/><ellipse cx="3" cy="11" rx="7" ry="10" fill="url(#tl9)"/><ellipse cx="8" cy="27" rx="14" ry="5" fill="url(#tl9)"/><ellipse cx="42" cy="3" rx="7" ry="5" fill="url(#tl9)"/><ellipse cx="27" cy="21.5" rx="24" ry="7.5" fill="url(#fl9)"/><ellipse cx="6" cy="27" rx="9" ry="3" fill="#0e3a4a" opacity=".7"/><text transform="translate(1.2,16.6) scale(1.62,1)" font-size="17.5" font-weight="bold" font-family="Liberation Sans" fill="url(#gd9)">魔</text><text transform="translate(30.5,16.8) scale(1.3,1)" font-size="16.5" font-weight="bold" font-family="Liberation Sans" fill="url(#gd9)">域</text><text transform="translate(17,23.6) scale(1.2,1)" font-size="7" font-weight="bold" font-family="Liberation Sans" fill="#f0a030">传奇永恒</text></g></svg></div>
<div class="sw on" style="left:848px;top:449px"><em>是</em><i></i></div>
<div class="sw on" style="left:936px;top:449px"><em>是</em><i></i></div>
<div class="sw off" style="left:1024px;top:449px"><i></i><em>否</em></div>
<div class="bx" style="left:1112px;top:450px;background:#ffb800">主页</div>
<div class="bx" style="left:1178px;top:450px;background:#009688">编辑</div>
<div class="bx" style="left:1226px;top:450px;background:#ff5722">删除</div>
<div class="cb" style="left:15px;top:490px"></div>
<div class="c" style="left:64px;top:480px">36938</div>
<div class="c" style="left:140px;top:480px">壹D资源收藏网</div>
<div class="c" style="left:367px;top:480px">2025-09-13</div>
<div class="c" style="left:473px;top:480px">23</div>
<div class="c" style="left:534px;top:480px">0</div>
<div class="c" style="left:595px;top:480px">1</div>
<div class="c" style="left:671px;top:480px">10</div>
<div class="c" style="left:747px;top:480px">超级管理员</div>
<div class="img" style="left:291px;top:485px"><svg width="45" height="28" viewBox="0 0 45 28"><defs><linearGradient id="gd10" x1="0" y1="0" x2="0" y2="1"><stop offset="0" stop-color="#fff2b8"/><stop offset=".5" stop-color="#f0c060"/><stop offset="1" stop-color="#a86a20"/></linearGradient><radialGradient id="fl10" cx=".5" cy=".5" r=".5"><stop offset="0" stop-color="#ff7a20"/><stop offset=".6" stop-color="#c82008"/><stop offset="1" stop-color="#500800" stop-opacity="0"/></radialGradient><radialGradient id="tl10" cx=".5" cy=".5" r=".5"><stop offset="0" stop-color="#1a4a5a"/><stop offset="1" stop-color="#0a1a22" stop-opacity="0"/></radialGradient><filter id="mb10"><feGaussianBlur stdDeviation=".35"/></filter></defs><g filter="url(#mb10)"><rect width="45" height="28" fill="#04080c"/><ellipse cx="3" cy="11" rx="7" ry="10" fill="url(#tl10)"/><ellipse cx="8" cy="27" rx="14" ry="5" fill="url(#tl10)"/><ellipse cx="42" cy="3" rx="7" ry="5" fill="url(#tl10)"/><ellipse cx="27" cy="21.5" rx="24" ry="7.5" fill="url(#fl10)"/><ellipse cx="6" cy="27" rx="9" ry="3" fill="#0e3a4a" opacity=".7"/><text transform="translate(1.2,16.6) scale(1.62,1)" font-size="17.5" font-weight="bold" font-family="Liberation Sans" fill="url(#gd10)">魔</text><text transform="translate(30.5,16.8) scale(1.3,1)" font-size="16.5" font-weight="bold" font-family="Liberation Sans" fill="url(#gd10)">域</text><text transform="translate(17,23.6) scale(1.2,1)" font-size="7" font-weight="bold" font-family="Liberation Sans" fill="#f0a030">传奇永恒</text></g></svg></div>
<div class="sw on" style="left:848px;top:488px"><em>是</em><i></i></div>
<div class="sw on" style="left:936px;top:488px"><em>是</em><i></i></div>
<div class="sw off" style="left:1024px;top:488px"><i></i><em>否</em></div>
<div class="bx" style="left:1112px;top:489px;background:#ffb800">主页</div>
<div class="bx" style="left:1178px;top:489px;background:#009688">编辑</div>
<div class="bx" style="left:1226px;top:489px;background:#ff5722">删除</div>
<div class="cb" style="left:15px;top:529px"></div>
<div class="c" style="left:64px;top:519px">36937</div>
<div class="c" style="left:140px;top:519px">壹D资源收藏网</div>
<div class="c" style="left:367px;top:519px">2025-09-22</div>
<div class="c" style="left:473px;top:519px">23</div>
<div class="c" style="left:534px;top:519px">0</div>
<div class="c" style="left:595px;top:519px">1</div>
<div class="c" style="left:671px;top:519px">10</div>
<div class="c" style="left:747px;top:519px">超级管理员</div>
<div class="img" style="left:291px;top:524px"><svg width="45" height="28" viewBox="0 0 45 28"><defs><linearGradient id="gb11" x1="0" y1="0" x2="1" y2=".6"><stop offset="0" stop-color="#f2e4ee"/><stop offset=".45" stop-color="#ddd2e8"/><stop offset="1" stop-color="#cdc3df"/></linearGradient><linearGradient id="gh11" x1="0" y1="0" x2="0" y2="1"><stop offset="0" stop-color="#5e5258"/><stop offset="1" stop-color="#2e242c"/></linearGradient><filter id="bl11" x="-5%" y="-5%" width="110%" height="110%"><feGaussianBlur stdDeviation=".45"/></filter><clipPath id="cp11"><rect width="45" height="28" rx="3"/></clipPath></defs><g clip-path="url(#cp11)"><g filter="url(#bl11)"><rect width="45" height="28" fill="url(#gb11)"/><ellipse cx="3" cy="12" rx="4" ry="4" fill="#e6c0d2" opacity=".8"/><ellipse cx="8" cy="2.5" rx="5" ry="2" fill="#eccada" opacity=".8"/><ellipse cx="42" cy="21" rx="4" ry="6" fill="#b8accf" opacity=".7"/><path d="M0 21 C5 18 12 19 17 22 L18 28 H0 Z" fill="#e8e6ee"/><path d="M7 28 C9 26.3 13 26.3 16 28 Z" fill="#5a84c4"/><path d="M11 13 C13 6 18 1.5 25 1 C32 0.8 36 3.5 36.5 8.5 C37 14 36.5 21 35 27 L33.5 27 C33.5 20 33 15 31 12 Z" fill="url(#gh11)"/><path d="M5 22 C7 16 11 11 18 9 L21 23 C16 24.5 9 25 5 22 Z" fill="#3c2e3a" opacity=".9"/><path d="M20 13 C23 10 31 9.5 35 13.5 C36 18 34.5 23 30 25.5 C25.5 26.5 21 24.5 20 20 Z" fill="#f3dede"/><path d="M19 13.5 C22 9 30 8 34 11 C29 10.5 24 11.5 20 15 Z" fill="#3e3238"/><path d="M22.5 17.6 L25.8 17 M28.3 16 L31.5 15.3" stroke="#5a3c48" stroke-width=".9"/><rect x="24.4" y="21.3" width="2.8" height="1.3" rx=".6" fill="#d63040"/><path d="M19 24 C23 27.5 30 27 33.5 23 L34 28 H18 Z" fill="#1e181e"/><path d="M3 18.5 C11 14 20 9 30 4.5" stroke="#78b4c4" stroke-width=".9" fill="none"/><path d="M28 3 L31 7 M33 2 L32 6" stroke="#e8e4f0" stroke-width=".6"/></g></g></svg></div>
<div class="sw off" style="left:848px;top:527px"><i></i><em>否</em></div>
<div class="sw off" style="left:936px;top:527px"><i></i><em>否</em></div>
<div class="sw on" style="left:1024px;top:527px"><em>是</em><i></i></div>
<div class="bx" style="left:1112px;top:528px;background:#ffb800">主页</div>
<div class="bx" style="left:1178px;top:528px;background:#009688">编辑</div>
<div class="bx" style="left:1226px;top:528px;background:#ff5722">删除</div>
<div class="cb" style="left:15px;top:568px"></div>
<div class="c" style="left:64px;top:558px">36936</div>
<div class="c" style="left:140px;top:558px">壹D资源收藏网</div>
<div class="c" style="left:367px;top:558px">2025-09-21</div>
<div class="c" style="left:473px;top:558px">23</div>
<div class="c" style="left:534px;top:558px">0</div>
<div class="c" style="left:595px;top:558px">1</div>
<div class="c" style="left:671px;top:558px">10</div>
<div class="c" style="left:747px;top:558px">超级管理员</div>
<div class="img" style="left:291px;top:563px"><svg width="45" height="28" viewBox="0 0 45 28"><defs><linearGradient id="gb12" x1="0" y1="0" x2="1" y2=".6"><stop offset="0" stop-color="#f2e4ee"/><stop offset=".45" stop-color="#ddd2e8"/><stop offset="1" stop-color="#cdc3df"/></linearGradient><linearGradient id="gh12" x1="0" y1="0" x2="0" y2="1"><stop offset="0" stop-color="#5e5258"/><stop offset="1" stop-color="#2e242c"/></linearGradient><filter id="bl12" x="-5%" y="-5%" width="110%" height="110%"><feGaussianBlur stdDeviation=".45"/></filter><clipPath id="cp12"><rect width="45" height="28" rx="3"/></clipPath></defs><g clip-path="url(#cp12)"><g filter="url(#bl12)"><rect width="45" height="28" fill="url(#gb12)"/><ellipse cx="3" cy="12" rx="4" ry="4" fill="#e6c0d2" opacity=".8"/><ellipse cx="8" cy="2.5" rx="5" ry="2" fill="#eccada" opacity=".8"/><ellipse cx="42" cy="21" rx="4" ry="6" fill="#b8accf" opacity=".7"/><path d="M0 21 C5 18 12 19 17 22 L18 28 H0 Z" fill="#e8e6ee"/><path d="M7 28 C9 26.3 13 26.3 16 28 Z" fill="#5a84c4"/><path d="M11 13 C13 6 18 1.5 25 1 C32 0.8 36 3.5 36.5 8.5 C37 14 36.5 21 35 27 L33.5 27 C33.5 20 33 15 31 12 Z" fill="url(#gh12)"/><path d="M5 22 C7 16 11 11 18 9 L21 23 C16 24.5 9 25 5 22 Z" fill="#3c2e3a" opacity=".9"/><path d="M20 13 C23 10 31 9.5 35 13.5 C36 18 34.5 23 30 25.5 C25.5 26.5 21 24.5 20 20 Z" fill="#f3dede"/><path d="M19 13.5 C22 9 30 8 34 11 C29 10.5 24 11.5 20 15 Z" fill="#3e3238"/><path d="M22.5 17.6 L25.8 17 M28.3 16 L31.5 15.3" stroke="#5a3c48" stroke-width=".9"/><rect x="24.4" y="21.3" width="2.8" height="1.3" rx=".6" fill="#d63040"/><path d="M19 24 C23 27.5 30 27 33.5 23 L34 28 H18 Z" fill="#1e181e"/><path d="M3 18.5 C11 14 20 9 30 4.5" stroke="#78b4c4" stroke-width=".9" fill="none"/><path d="M28 3 L31 7 M33 2 L32 6" stroke="#e8e4f0" stroke-width=".6"/></g></g></svg></div>
<div class="sw off" style="left:848px;top:566px"><i></i><em>否</em></div>
<div class="sw off" style="left:936px;top:566px"><i></i><em>否</em></div>
<div class="sw on" style="left:1024px;top:566px"><em>是</em><i></i></div>
<div class="bx" style="left:1112px;top:567px;background:#ffb800">主页</div>
<div class="bx" style="left:1178px;top:567px;background:#009688">编辑</div>
<div class="bx" style="left:1226px;top:567px;background:#ff5722">删除</div>
<div class="cb" style="left:15px;top:607px"></div>
<div class="c" style="left:64px;top:597px">36935</div>
<div class="c" style="left:140px;top:597px">壹D资源收藏网</div>
<div class="c" style="left:367px;top:597px">2025-09-20</div>
<div class="c" style="left:473px;top:597px">23</div>
<div class="c" style="left:534px;top:597px">0</div>
<div class="c" style="left:595px;top:597px">1</div>
<div class="c" style="left:671px;top:597px">10</div>
<div class="c" style="left:747px;top:597px">超级管理员</div>
<div class="img" style="left:291px;top:602px"><svg width="45" height="28" viewBox="0 0 45 28"><defs><linearGradient id="gb13" x1="0" y1="0" x2="1" y2=".6"><stop offset="0" stop-color="#f2e4ee"/><stop offset=".45" stop-color="#ddd2e8"/><stop offset="1" stop-color="#cdc3df"/></linearGradient><linearGradient id="gh13" x1="0" y1="0" x2="0" y2="1"><stop offset="0" stop-color="#5e5258"/><stop offset="1" stop-color="#2e242c"/></linearGradient><filter id="bl13" x="-5%" y="-5%" width="110%" height="110%"><feGaussianBlur stdDeviation=".45"/></filter><clipPath id="cp13"><rect width="45" height="28" rx="3"/></clipPath></defs><g clip-path="url(#cp13)"><g filter="url(#bl13)"><rect width="45" height="28" fill="url(#gb13)"/><ellipse cx="3" cy="12" rx="4" ry="4" fill="#e6c0d2" opacity=".8"/><ellipse cx="8" cy="2.5" rx="5" ry="2" fill="#eccada" opacity=".8"/><ellipse cx="42" cy="21" rx="4" ry="6" fill="#b8accf" opacity=".7"/><path d="M0 21 C5 18 12 19 17 22 L18 28 H0 Z" fill="#e8e6ee"/><path d="M7 28 C9 26.3 13 26.3 16 28 Z" fill="#5a84c4"/><path d="M11 13 C13 6 18 1.5 25 1 C32 0.8 36 3.5 36.5 8.5 C37 14 36.5 21 35 27 L33.5 27 C33.5 20 33 15 31 12 Z" fill="url(#gh13)"/><path d="M5 22 C7 16 11 11 18 9 L21 23 C16 24.5 9 25 5 22 Z" fill="#3c2e3a" opacity=".9"/><path d="M20 13 C23 10 31 9.5 35 13.5 C36 18 34.5 23 30 25.5 C25.5 26.5 21 24.5 20 20 Z" fill="#f3dede"/><path d="M19 13.5 C22 9 30 8 34 11 C29 10.5 24 11.5 20 15 Z" fill="#3e3238"/><path d="M22.5 17.6 L25.8 17 M28.3 16 L31.5 15.3" stroke="#5a3c48" stroke-width=".9"/><rect x="24.4" y="21.3" width="2.8" height="1.3" rx=".6" fill="#d63040"/><path d="M19 24 C23 27.5 30 27 33.5 23 L34 28 H18 Z" fill="#1e181e"/><path d="M3 18.5 C11 14 20 9 30 4.5" stroke="#78b4c4" stroke-width=".9" fill="none"/><path d="M28 3 L31 7 M33 2 L32 6" stroke="#e8e4f0" stroke-width=".6"/></g></g></svg></div>
<div class="sw off" style="left:848px;top:605px"><i></i><em>否</em></div>
<div class="sw off" style="left:936px;top:605px"><i></i><em>否</em></div>
<div class="sw on" style="left:1024px;top:605px"><em>是</em><i></i></div>
<div class="bx" style="left:1112px;top:606px;background:#ffb800">主页</div>
<div class="bx" style="left:1178px;top:606px;background:#009688">编辑</div>
<div class="bx" style="left:1226px;top:606px;background:#ff5722">删除</div>
<div class="cb" style="left:15px;top:646px"></div>
<div class="c" style="left:64px;top:636px">36934</div>
<div class="c" style="left:140px;top:636px">壹D资源收藏网</div>
<div class="c" style="left:367px;top:636px">2025-09-19</div>
<div class="c" style="left:473px;top:636px">23</div>
<div class="c" style="left:534px;top:636px">0</div>
<div class="c" style="left:595px;top:636px">1</div>
<div class="c" style="left:671px;top:636px">10</div>
<div class="c" style="left:747px;top:636px">超级管理员</div>
<div class="img" style="left:291px;top:641px"><svg width="45" height="28" viewBox="0 0 45 28"><defs><linearGradient id="gb14" x1="0" y1="0" x2="1" y2=".6"><stop offset="0" stop-color="#f2e4ee"/><stop offset=".45" stop-color="#ddd2e8"/><stop offset="1" stop-color="#cdc3df"/></linearGradient><linearGradient id="gh14" x1="0" y1="0" x2="0" y2="1"><stop offset="0" stop-color="#5e5258"/><stop offset="1" stop-color="#2e242c"/></linearGradient><filter id="bl14" x="-5%" y="-5%" width="110%" height="110%"><feGaussianBlur stdDeviation=".45"/></filter><clipPath id="cp14"><rect width="45" height="28" rx="3"/></clipPath></defs><g clip-path="url(#cp14)"><g filter="url(#bl14)"><rect width="45" height="28" fill="url(#gb14)"/><ellipse cx="3" cy="12" rx="4" ry="4" fill="#e6c0d2" opacity=".8"/><ellipse cx="8" cy="2.5" rx="5" ry="2" fill="#eccada" opacity=".8"/><ellipse cx="42" cy="21" rx="4" ry="6" fill="#b8accf" opacity=".7"/><path d="M0 21 C5 18 12 19 17 22 L18 28 H0 Z" fill="#e8e6ee"/><path d="M7 28 C9 26.3 13 26.3 16 28 Z" fill="#5a84c4"/><path d="M11 13 C13 6 18 1.5 25 1 C32 0.8 36 3.5 36.5 8.5 C37 14 36.5 21 35 27 L33.5 27 C33.5 20 33 15 31 12 Z" fill="url(#gh14)"/><path d="M5 22 C7 16 11 11 18 9 L21 23 C16 24.5 9 25 5 22 Z" fill="#3c2e3a" opacity=".9"/><path d="M20 13 C23 10 31 9.5 35 13.5 C36 18 34.5 23 30 25.5 C25.5 26.5 21 24.5 20 20 Z" fill="#f3dede"/><path d="M19 13.5 C22 9 30 8 34 11 C29 10.5 24 11.5 20 15 Z" fill="#3e3238"/><path d="M22.5 17.6 L25.8 17 M28.3 16 L31.5 15.3" stroke="#5a3c48" stroke-width=".9"/><rect x="24.4" y="21.3" width="2.8" height="1.3" rx=".6" fill="#d63040"/><path d="M19 24 C23 27.5 30 27 33.5 23 L34 28 H18 Z" fill="#1e181e"/><path d="M3 18.5 C11 14 20 9 30 4.5" stroke="#78b4c4" stroke-width=".9" fill="none"/><path d="M28 3 L31 7 M33 2 L32 6" stroke="#e8e4f0" stroke-width=".6"/></g></g></svg></div>
<div class="sw off" style="left:848px;top:644px"><i></i><em>否</em></div>
<div class="sw off" style="left:936px;top:644px"><i></i><em>否</em></div>
<div class="sw on" style="left:1024px;top:644px"><em>是</em><i></i></div>
<div class="bx" style="left:1112px;top:645px;background:#ffb800">主页</div>
<div class="bx" style="left:1178px;top:645px;background:#009688">编辑</div>
<div class="bx" style="left:1226px;top:645px;background:#ff5722">删除</div>
<div id="shadowL" style="left:125px;top:51px;height:623px"></div>
<div id="page">
<svg class="abs" style="left:16px;top:14px" width="8" height="12" viewBox="0 0 8 12"><path d="M7 0.5 L1.2 6 L7 11.5" fill="none" stroke="#d2d2d2" stroke-width="1.2"/></svg>
<div class="pg" style="left:39px;top:7px;width:31px;text-align:center;background:#009688;color:#fff;border-radius:2px">1</div>
<div class="pg" style="left:70px;top:7px;width:29px;text-align:center;">2</div>
<div class="pg" style="left:99px;top:7px;width:30px;text-align:center;">3</div>
<div class="pg" style="left:124px;top:7px;width:20px;text-align:center;">…</div>
<div class="pg" style="left:142px;top:7px;width:26px;text-align:center;">6</div>
<svg class="abs" style="left:185px;top:14px" width="8" height="12" viewBox="0 0 8 12"><path d="M1 0.5 L6.8 6 L1 11.5" fill="none" stroke="#333" stroke-width="1.2"/></svg>
<div class="pg" style="left:208px;top:7px;width:24px;text-align:center;color:#999;text-align:left">到第</div>
<div class="pg" style="left:242px;top:7px;width:40px;height:26px;border:1px solid #e6e6e6;border-radius:2px;text-align:center;line-height:24px;color:#333">1</div>
<div class="pg" style="left:292px;top:7px;width:12px;text-align:center;color:#999;text-align:left">页</div>
<div class="pg" style="left:314px;top:7px;width:46px;height:26px;border:1px solid #e6e6e6;border-radius:2px;text-align:center;line-height:24px;color:#000">确定</div>
<div class="pg" style="left:369px;top:7px;width:50px;text-align:center;text-align:left;color:#333">共 81 条</div>
<div class="pg" style="left:424px;top:7px;width:75px;height:26px;border:1px solid #e6e6e6;border-radius:2px;line-height:24px;color:#000;padding-left:8px">15 条/页<svg style="position:absolute;left:59px;top:8px" width="10" height="8" viewBox="0 0 10 8"><path d="M1 1.5 L5 5.5 L9 1.5" fill="none" stroke="#000" stroke-width="1.8"/></svg></div>
</div>
</div>
</body></html>
